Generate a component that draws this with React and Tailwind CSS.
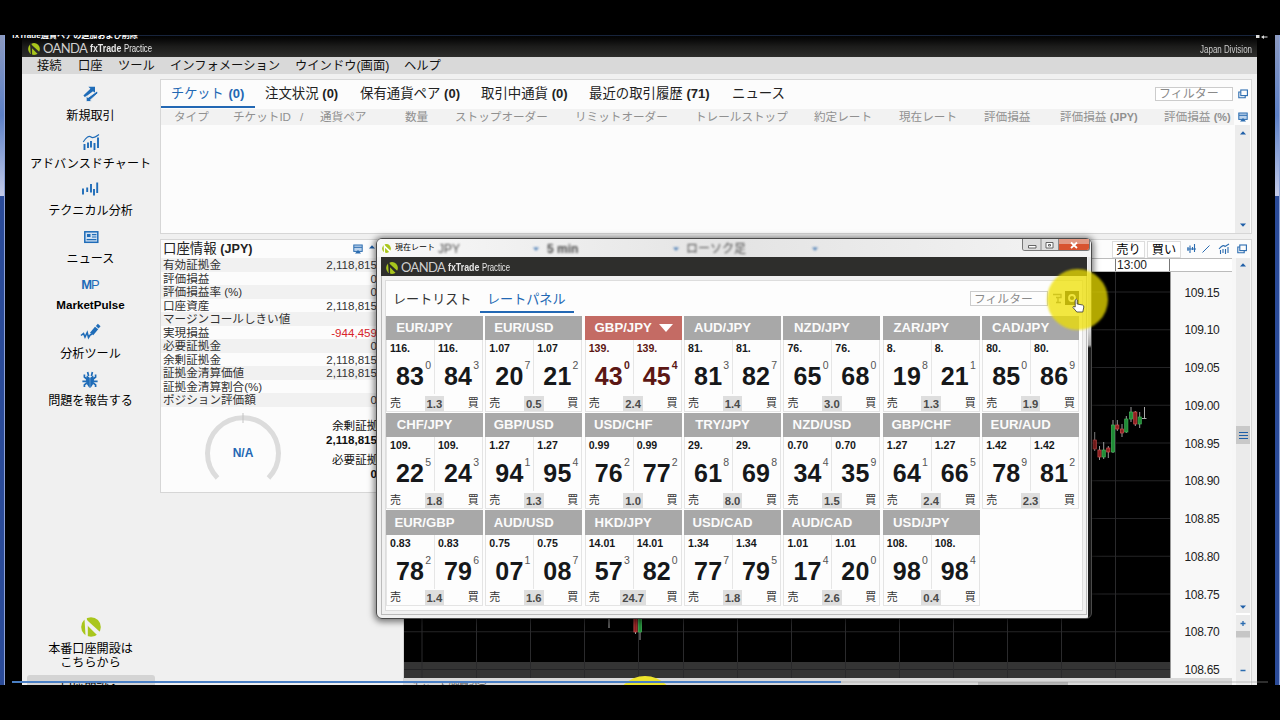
import React from "react";

const Logo = ({ size = 20, cut = "#fff", color = "#a9c61c" }) => (
  <svg width={size} height={size} viewBox="0 0 20 20" className="shrink-0">
    <circle cx="10" cy="10" r="9.8" fill={color} />
    <path d="M3.4 0 H5.4 L6.8 6 V20 H4.6 Z" fill={cut} />
    <path d="M3.2 1.5 L6.4 3.4 L19.6 15.4 L17 19 L5.4 7.4 Z" fill={cut} />
  </svg>
);

const Brand = ({ logoSize }) => (
  <div className="flex items-center whitespace-nowrap text-[#e6e6e6]">
    <Logo size={logoSize} cut="#2b2b29" />
    <span className="ml-[3px] w-[47px] font-['Lato'] text-[13px] leading-none font-normal tracking-[-0.6px] text-[#d0d0d0]">OANDA</span>
    <span className="w-[34px] origin-left scale-x-[0.84] text-[10.5px] leading-none font-bold">fxTrade</span>
    <span className="w-[28px] origin-left scale-x-[0.74] text-[10.5px] leading-none">Practice</span>
  </div>
);

const Popout = () => (
  <svg width="10" height="10" viewBox="0 0 10 10" fill="none" stroke="#2b6cb0" strokeWidth="1.1">
    <rect x="2.8" y="1" width="6.6" height="5.6" />
    <path d="M2.8 3 H0.8 V8.8 H7.2 V6.6" />
  </svg>
);

const Dock = () => (
  <svg width="10" height="10" viewBox="0 0 10 10">
    <rect x="0.8" y="1" width="8.4" height="6.4" fill="#bcd3ec" stroke="#2b6cb0" />
    <path d="M1 3.3 H9" stroke="#2b6cb0" />
    <path d="M2 9.5 L5 6 L8 9.5 Z" fill="#2b6cb0" />
  </svg>
);

const Arrow = ({ down = false }) => (
  <svg width="6" height="4" viewBox="0 0 6 4">
    <path d={down ? "M0 0.5 H6 L3 3.8 Z" : "M0 3.5 H6 L3 0.2 Z"} fill="#1f5fa8" />
  </svg>
);

const icons = {
  trade: (
    <g fill="#1f6cb8">
      <path d="M7.4 1.8 H14 V8 L12 6.2 L4 12.2 L2.4 10.4 L9.4 3.8 Z" />
      <path d="M10.6 16.4 H4.8 V10.8 L6.6 12.4 L15.4 6 L16.8 7.8 L9 14.8 Z" transform="translate(.4 .2)" stroke="#f0f0f0" strokeWidth=".9" />
    </g>
  ),
  chart: (
    <g fill="none" stroke="#1f6cb8" strokeWidth="1.9">
      <path d="M1.2 9 Q6 1.5 9 4 Q11 6 17 1.5" strokeWidth="1.1" />
      <path d="M2.5 11 V17 M6 9.5 V15 M9 8 V14.5 M12.5 10 V17 M16 4.5 V15" />
    </g>
  ),
  technical: (
    <g fill="none" stroke="#1f6cb8" strokeWidth="1.9">
      <path d="M2 8.5 V14.5 M6.2 7.5 V12 M10 4 V12.5 M13 9 V15.5 M16.2 2.5 V13" />
    </g>
  ),
  news: (
    <g fill="none" stroke="#1f6cb8" strokeWidth="1.5">
      <rect x="2.8" y="3.8" width="13" height="10.5" fill="#cfe0f2" />
      <rect x="5" y="6" width="3.5" height="3" fill="#1f6cb8" stroke="none" />
      <path d="M10 6.6 H14.4 M10 9 H14.4 M4.6 11.6 H14.4" strokeWidth="1.2" />
    </g>
  ),
  tools: (
    <g fill="none" stroke="#1f6cb8" strokeWidth="1.8">
      <path d="M0 12.5 L2.5 10.5 L4 14 L6.2 9.5 L7.5 14.5 L9.5 11.5 L11 11.5" strokeWidth="1.6" />
      <path d="M10.6 11 L15.6 5" strokeWidth="4.2" />
      <path d="M16.2 4.3 L18.2 2" strokeWidth="3.6" />
    </g>
  ),
  bug: (
    <g fill="none" stroke="#1f6cb8" strokeWidth="1.7">
      <path d="M8.2 16.5 Q4.2 12 6.2 6.5 L8.2 8 Z M9.8 16.5 Q13.8 12 11.8 6.5 L9.8 8 Z" fill="#1f6cb8" strokeWidth="1.2" />
      <path d="M5.8 9 L3.4 7 V4.4 M5.6 11.4 H1.4 M5.8 13 L3.4 14.8 V17 M12.2 9 L14.6 7 V4.4 M12.4 11.4 H16.6 M12.2 13 L14.6 14.8 V17 M7.6 6 L6.6 2 M10.4 6 L11.4 2" />
    </g>
  ),
};

const sidebar = [
  { icon: "trade", label: "新規取引" },
  { icon: "chart", label: "アドバンスドチャート" },
  { icon: "technical", label: "テクニカル分析" },
  { icon: "news", label: "ニュース" },
  { icon: "mp", label: "MarketPulse" },
  { icon: "tools", label: "分析ツール" },
  { icon: "bug", label: "問題を報告する" },
];

const Sidebar = () => (
  <aside className="flex w-[137px] shrink-0 flex-col items-center bg-[#f0f0f0] pt-[11px] text-black">
    {sidebar.map(({ icon, label }) => (
      <div key={label} className="flex h-[47.55px] flex-col items-center">
        {icon === "mp" ? (
          <span className="h-[18px] text-[13px] leading-[20px] font-bold text-[#1f6cb8]">
            M<span className="-ml-px font-normal">P</span>
          </span>
        ) : (
          <svg width="18" height="18" viewBox="0 0 18 18" className="overflow-visible">{icons[icon]}</svg>
        )}
        <span className={`whitespace-nowrap ${icon === "mp" ? "mt-[3px] text-[11.6px] leading-[18px] font-bold" : "mt-[4px] text-[12.1px] leading-[18px]"}`}>{label}</span>
      </div>
    ))}
    <div className="mt-[199px] flex flex-col items-center">
      <Logo size={20} cut="#f0f0f0" />
      <p className="mt-[5px] text-center text-[12.1px] leading-[14.5px]">
        本番口座開設は
        <br />
        こちらから
      </p>
      <div className="mt-[4px] h-5 w-[128px] rounded-[3px] bg-[#d4d4d4] pt-[5px] text-center text-[12px] leading-[17px]">口座開設へ</div>
    </div>
  </aside>
);

const menu = [
  { label: "接続", w: "w-[41px]" },
  { label: "口座", w: "w-[40px]" },
  { label: "ツール", w: "w-[52px]" },
  { label: "インフォメーション", w: "w-[125px]" },
  { label: "ウインドウ(画面)", w: "w-[109px]" },
  { label: "ヘルプ", w: "w-[50px]" },
];

const tabs = [
  { label: "注文状況", count: "(0)", w: "w-[95px]" },
  { label: "保有通貨ペア", count: "(0)", w: "w-[121px]" },
  { label: "取引中通貨", count: "(0)", w: "w-[108px]" },
  { label: "最近の取引履歴", count: "(71)", w: "w-[143px]" },
  { label: "ニュース", w: "w-[60px]" },
];

const columns = [
  { label: "タイプ", w: "w-[59px]" },
  { label: "チケットID", w: "w-[67px]" },
  { label: "/", w: "w-[20px]" },
  { label: "通貨ペア", w: "w-[85px]" },
  { label: "数量", w: "w-[50px]" },
  { label: "ストップオーダー", w: "w-[120px]" },
  { label: "リミットオーダー", w: "w-[120px]" },
  { label: "トレールストップ", w: "w-[119px]" },
  { label: "約定レート", w: "w-[85px]" },
  { label: "現在レート", w: "w-[85px]" },
  { label: "評価損益", w: "w-[76px]" },
  { label: "評価損益", unit: "(JPY)", w: "w-[104px]" },
  { label: "評価損益", unit: "(%)", w: "w-[68px]" },
];

const TicketPanel = () => (
  <section className="flex h-[155px] w-[1092px] flex-col border border-[#d6d6d6] bg-[#fcfcfc]">
    <div className="flex h-[29px] items-start">
      <div className="h-[28px] w-[94px] border-b-2 border-[#2368b4] pl-[10px] text-[13.2px] leading-[27px] whitespace-nowrap text-[#2368b4]">
        チケット <b className="ml-px text-[13px]">(0)</b>
      </div>
      <div className="ml-[10px] flex text-[13.4px] leading-[27px] whitespace-nowrap text-[#222]">
        {tabs.map((t) => (
          <div key={t.label} className={`${t.w} shrink-0`}>
            {t.label} {t.count && <b className="text-[13px]">{t.count}</b>}
          </div>
        ))}
      </div>
      <div className="mt-[7px] mr-[5px] ml-auto h-[14px] w-[78px] border border-[#ccc] bg-white pl-[3px] text-[12px] leading-[13px] text-[#8a8a8a]">フィルター</div>
      <div className="mt-[9px] mr-[3px]"><Popout /></div>
    </div>
    <div className="flex h-[15px] items-center">
      <div className="flex w-[1073px] bg-[#f2f2f2] pl-[13px] text-[11.6px] leading-[15px] whitespace-nowrap text-[#909090]">
        {columns.map((c, i) => (
          <div key={i} className={`${c.w} shrink-0`}>
            {c.label} {c.unit && <b className="text-[11px]">{c.unit}</b>}
          </div>
        ))}
      </div>
      <div className="ml-[4px]"><Dock /></div>
    </div>
    <div className="mt-px mr-px flex flex-1 justify-end">
      <div className="flex w-[15px] flex-col items-center justify-between bg-[#ececec] py-[6px]">
        <Arrow />
        <Arrow down />
      </div>
    </div>
  </section>
);

const account = [
  ["有効証拠金", "2,118,815"],
  ["評価損益", "0"],
  ["評価損益率 (%)", "0"],
  ["口座資産", "2,118,815"],
  ["マージンコールしきい値", ""],
  ["実現損益", "-944,459"],
  ["必要証拠金", "0"],
  ["余剰証拠金", "2,118,815"],
  ["証拠金清算価値", "2,118,815"],
  ["証拠金清算割合(%)", ""],
  ["ポジション評価額", "0"],
];

const AccountPanel = () => (
  <section className="h-[254px] w-[236px] shrink-0 overflow-hidden border border-[#d6d6d6] bg-[#fcfcfc] text-[#333]">
    <div className="flex h-[18px] items-center pl-[2px]">
      <h2 className="w-[190px] text-[13.4px] leading-[18px] whitespace-nowrap text-[#222]">
        口座情報 <b className="text-[12.6px]">(JPY)</b>
      </h2>
      <Dock />
      <span className="mb-1 ml-[6px]"><Arrow /></span>
    </div>
    {account.map(([label, value], i) => (
      <div key={label} className={`flex h-[13.5px] justify-between pr-[18px] pl-[2px] text-[11.6px] leading-[13.5px] whitespace-nowrap ${i % 2 === 0 ? "bg-[#f1f1f1]" : ""}`}>
        <span>{label}</span>
        <span className={value.startsWith("-") ? "text-[#d8232a]" : ""}>{value}</span>
      </div>
    ))}
    <div className="flex">
      <svg width="164" height="85" viewBox="0 0 164 85">
        <path d="M56.5 71 A35.5 35.5 0 1 1 107.5 71" fill="none" stroke="#dcdcdc" strokeWidth="5" />
        <path d="M82 6 V16" stroke="#c4c4c4" />
        <text x="82" y="50" textAnchor="middle" fontSize="12" fontWeight="bold" fill="#2368b4" fontFamily="Liberation Sans">N/A</text>
      </svg>
      <div className="w-[52px] pt-[12px] text-[11.6px] leading-[14.5px] whitespace-nowrap text-[#111]">
        <div className="pl-[7px]">余剰証拠金</div>
        <div className="text-right font-bold">2,118,815</div>
        <div className="mt-[5px] pl-[7px]">必要証拠金</div>
        <div className="text-right font-bold">0</div>
      </div>
    </div>
  </section>
);

const gridX = [18, 72.5, 126.5, 180.5, 234.5, 279.5, 333.5, 387.5, 441.5, 495.5, 549.5, 603.5, 657.5, 711.5];
const prices = ["109.15", "109.10", "109.05", "109.00", "108.95", "108.90", "108.85", "108.80", "108.75", "108.70", "108.65"];

// x, body top, body bottom, wick top, wick bottom, rising
const candles = [
  [690.7, 168, 177, 160, 179, false],
  [695.5, 178, 185, 174, 188, false],
  [699.7, 178, 185, 170, 187, true],
  [704.3, 176, 180, 174, 186, false],
  [709, 153, 180, 148, 181, true],
  [713.3, 153, 157, 148, 159, false],
  [718, 157, 161, 152, 165, false],
  [722.3, 147, 160, 144, 161, true],
  [727, 140, 147, 135, 150, true],
  [731.3, 140, 152, 139, 154, false],
  [735.7, 145, 152, 140, 156, true],
  [231.5, 335, 360, 335, 362, false],
  [236, 335, 360, 335, 368, true],
];

const Chart = () => (
  <svg width="766" height="406" viewBox="0 0 766 406" className="block bg-black">
    <rect x="0" y="390" width="766" height="16" fill="#343434" />
    {prices.map((p, i) => (
      <path key={p} d={`M0 ${20 + i * 37.75} H766`} stroke="#242426" />
    ))}
    {gridX.map((x) => (
      <path key={x} d={`M${x} 0 V406`} stroke="#2a2a2c" />
    ))}
    {candles.map(([x, top, bottom, high, low, up], i) => (
      <g key={i}>
        <path d={`M${x} ${high} V${low}`} stroke="#9b9b9b" />
        <rect x={x - 1.6} y={top} width="3.2" height={bottom - top} fill={up ? "#1f8b35" : "#8e1f1f"} stroke={up ? "#44b35a" : "#d05252"} strokeWidth=".7" />
      </g>
    ))}
    <path d="M740.5 135 V147 M738 146.5 H742.5 M205 345 V356" stroke="#a9a9a9" />
  </svg>
);

const ChartPanel = () => (
  <section className="flex h-[450px] w-[849px] flex-col border border-[#d6d6d6] bg-[#f7f7f7]">
    <div className="flex h-[18px] items-center justify-end bg-[#fcfcfc] pr-[4px] text-[12.2px] text-black">
      <span className="mr-[2px] h-[17px] w-[33px] border border-[#ddd] bg-white text-center leading-[17px]">売り</span>
      <span className="mr-[6px] h-[17px] w-[34px] border border-[#ddd] bg-white text-center leading-[17px]">買い</span>
      <svg width="45" height="12" viewBox="0 0 45 12" fill="none" stroke="#2b6cb0">
        <path d="M1 4 V8 M3 2.5 V10 M5.5 4 V7 M7.5 1 V9 M0 6 H9" strokeWidth="1.1" />
        <path d="M15.5 9.5 L22.5 2.5" />
        <path d="M32 6 Q36 1 38 3.5 L42 1 M33.5 7 V11 M36 6 V10 M38.5 6 V11 M41 4 V10" strokeWidth="1.1" />
      </svg>
      <span className="ml-[5px]"><Popout /></span>
    </div>
    <div className="flex h-[428px] shrink-0">
      <div className="flex w-[828px] flex-col">
        <div className="flex h-[14px] shrink-0 border-y border-[#bbb] bg-white text-[12px] leading-[13px] text-[#222]">
          <div className="w-[712px] border-r border-[#777]" />
          <div className="w-[54px] border-r border-[#777] pl-[1px]">13:00</div>
        </div>
        <div className="flex h-[406px] shrink-0">
          <Chart />
          <div className="flex flex-1 flex-col border-l border-[#999] bg-[#f8f8f8] pt-[1.5px] text-[12px] text-[#222]">
            {prices.map((p) => (
              <div key={p} className="h-[37.75px] shrink-0 pl-[13.5px] leading-[38px] tracking-[-0.3px] last:h-[27px]">{p}</div>
            ))}
          </div>
        </div>
        <div className="relative flex h-[8px] shrink-0 bg-[#d8d8d8] pl-2 text-[9px] leading-[16px] text-[#555]">チャート/期間設定</div>
      </div>
      <div className="ml-[4px] flex w-[14px] flex-col items-center bg-[#ebebeb]">
        <div className="flex h-[357px] w-full shrink-0 flex-col items-center border-b-2 border-white pt-[5px]">
          <Arrow />
          <div className="mt-[159px] flex h-[18px] w-full flex-col items-center justify-center gap-[2px] bg-[#c9c9c9]">
            <i className="h-px w-[9px] bg-[#1f5fa8]" />
            <i className="h-px w-[9px] bg-[#1f5fa8]" />
            <i className="h-px w-[9px] bg-[#1f5fa8]" />
          </div>
          <div className="mt-auto mb-[4px] flex"><Arrow down /></div>
        </div>
        <svg width="14" height="66" viewBox="0 0 14 66">
          <path d="M4.5 8.5 H9.5 M7 6 V11 M4.5 55.5 H9.5" stroke="#2b6cb0" strokeWidth="1.3" />
          <rect y="16" width="14" height="6.5" fill="#c6c6c6" />
        </svg>
      </div>
    </div>
  </section>
);

const pairs = [
  ["EUR/JPY", "116.", "83", "0", "116.", "84", "3", "1.3"],
  ["EUR/USD", "1.07", "20", "7", "1.07", "21", "2", "0.5"],
  ["GBP/JPY", "139.", "43", "0", "139.", "45", "4", "2.4"],
  ["AUD/JPY", "81.", "81", "3", "81.", "82", "7", "1.4"],
  ["NZD/JPY", "76.", "65", "0", "76.", "68", "0", "3.0"],
  ["ZAR/JPY", "8.", "19", "8", "8.", "21", "1", "1.3"],
  ["CAD/JPY", "80.", "85", "0", "80.", "86", "9", "1.9"],
  ["CHF/JPY", "109.", "22", "5", "109.", "24", "3", "1.8"],
  ["GBP/USD", "1.27", "94", "1", "1.27", "95", "4", "1.3"],
  ["USD/CHF", "0.99", "76", "2", "0.99", "77", "2", "1.0"],
  ["TRY/JPY", "29.", "61", "8", "29.", "69", "8", "8.0"],
  ["NZD/USD", "0.70", "34", "4", "0.70", "35", "9", "1.5"],
  ["GBP/CHF", "1.27", "64", "1", "1.27", "66", "5", "2.4"],
  ["EUR/AUD", "1.42", "78", "9", "1.42", "81", "2", "2.3"],
  ["EUR/GBP", "0.83", "78", "2", "0.83", "79", "6", "1.4"],
  ["AUD/USD", "0.75", "07", "1", "0.75", "08", "7", "1.6"],
  ["HKD/JPY", "14.01", "57", "3", "14.01", "82", "0", "24.7"],
  ["USD/CAD", "1.34", "77", "7", "1.34", "79", "5", "1.8"],
  ["AUD/CAD", "1.01", "17", "4", "1.01", "20", "0", "2.6"],
  ["USD/JPY", "108.", "98", "0", "108.", "98", "4", "0.4"],
];

const Quote = ({ base, big, pip, active }) => (
  <div className={`flex-1 pl-[3px] ${active ? "text-[#5c1714]" : "text-[#16181a]"}`}>
    <div className="pt-[2px] text-[10.6px] leading-[12px] font-bold">{base}</div>
    <div className="mt-[6px] flex pl-[6px]">
      <span className="text-[25px] leading-[32px] font-bold tracking-[0.2px]">{big}</span>
      <span className={`pl-px text-[10.5px] leading-[11px] ${active ? "font-bold" : "text-[#555]"}`}>{pip}</span>
    </div>
  </div>
);

const RateCard = ({ data, active, last }) => {
  const [pair, sell, sellBig, sellPip, buy, buyBig, buyPip, spread] = data;
  return (
    <div className="flex flex-col border border-t-0 border-[#e4e4e4] bg-[#fdfdfd]">
      <div className={`-mx-px flex shrink-0 items-center text-[#fbfbfb] ${last ? "h-[25px]" : "h-[24px]"} ${active ? "bg-[#c46b64]" : "bg-[#a8a8a8]"}`}>
        <span className="w-[77px] text-center text-[13.2px] leading-none font-bold">{pair}</span>
        {active && (
          <svg width="14" height="8" viewBox="0 0 14 8" className="-ml-[3px]">
            <path d="M0 0 H14 L7 8 Z" fill="#fff" />
          </svg>
        )}
      </div>
      <div className="flex h-[54px] divide-x divide-[#e6e6e6]">
        <Quote base={sell} big={sellBig} pip={sellPip} active={active} />
        <Quote base={buy} big={buyBig} pip={buyPip} active={active} />
      </div>
      <div className={`flex items-end justify-between px-[3px] text-[11px] leading-[16px] text-[#333] ${last ? "h-[16px]" : "h-[17px]"}`}>
        <span className="w-[18px]">売</span>
        <span className="h-[15px] min-w-[19px] bg-[#dedede] px-[2px] text-center text-[11.3px] leading-[16px] font-bold text-[#4a4a4a]">{spread}</span>
        <span className="w-[18px] text-right">買</span>
      </div>
    </div>
  );
};

const RatesWindow = () => (
  <div className="absolute top-[203px] left-[376px] flex h-[381px] w-[716px] flex-col rounded-[6px] border border-[#4a4a4a] bg-[linear-gradient(90deg,#f1f1f1_0,#f1f1f1_711px,transparent_711px),linear-gradient(180deg,#ececec_0,#d8d8d8_90px,#a8a8a8_106px,#1a1a1a_109px)] shadow-[0_1px_6px_2px_rgba(0,0,0,0.5)]">
    <div className="flex h-[18px] shrink-0 rounded-t-[5px] bg-linear-to-r from-[#f8f8f8] via-[#e4e4e4] to-[#f4f4f4] pl-[5px]">
      <div className="flex items-center gap-[4px] text-[8px] leading-[18px] whitespace-nowrap text-black">
        <Logo size={9} />
        現在レート
      </div>
      <div className="mt-[2px] flex items-center text-[12px] text-[#222] opacity-80 blur-[1.3px]">
        <span className="w-[98px] pl-[3px]">JPY</span>
        <span className="w-[14px]"><Arrow down /></span>
        <b className="w-[126px]">5 min</b>
        <span className="w-[13px]"><Arrow down /></span>
        <span className="w-[126px]">ローソク足</span>
        <Arrow down />
      </div>
      <div className="mr-[1px] ml-auto flex h-[12px] overflow-hidden rounded-b-[3px] border border-t-0 border-[#777]">
        <svg width="66" height="12" viewBox="0 0 66 12">
          <rect width="36" height="12" fill="#ddd" />
          <path d="M18 0 V12 M35.5 0 V12" stroke="#888" />
          <rect x="36" width="30" height="12" fill="#d8532f" />
          <rect x="36" width="30" height="5" fill="#e19a85" />
          <path d="M5.5 6.5 h7.5 v2.5 h-7.5 z M23 3.5 h7 v5.5 h-7 z M25.5 5.5 h2 v1.5 h-2 z" fill="#fff" stroke="#555" strokeWidth=".9" />
          <path d="M48 3.5 L54 9 M54 3.5 L48 9" stroke="#fff" strokeWidth="1.8" />
        </svg>
      </div>
    </div>
    <div className="mr-[4px] ml-[4px] flex h-[19px] shrink-0 items-center bg-[#2e2e2c] pt-[2px] pl-[5px]">
      <Brand logoSize={12} />
    </div>
    <div className="mr-[4px] mb-[3px] ml-[4px] flex flex-1 border border-t-0 border-[#bbb] bg-[#f1f1f1] p-[3px] pt-[4px]">
      <div className="flex w-[699px] flex-col border border-[#ddd] bg-[#fdfdfd]">
        <div className="flex h-[34px] shrink-0 pt-[5px] text-[13.1px] leading-[27px]">
          <div className="w-[94px] pl-[7px] whitespace-nowrap text-[#333]">レートリスト</div>
          <div className="h-[27px] w-[94px] border-b-2 border-[#2368b4] pl-[7px] whitespace-nowrap text-[#2368b4]">レートパネル</div>
          <div className="mt-[5px] ml-[396px] h-[15px] w-[78px] border border-[#ccc] pl-[3px] text-[11.8px] leading-[14px] text-[#8a8a8a]">フィルター</div>
          <svg width="28" height="15" viewBox="0 0 28 15" className="mt-[5px] ml-[3px]">
            <path d="M2 3.5 H10 V6.5 H5 M7 7 V11 M5 11.5 H10" fill="none" stroke="#777" strokeWidth="1.4" />
            <rect x="14" width="14" height="14" fill="#33332c" />
            <circle cx="21" cy="7" r="3" fill="none" stroke="#fff" strokeWidth="1.8" />
          </svg>
        </div>
        <div className="grid w-[693px] grid-cols-7 gap-x-[2.5px] gap-y-[1px] pt-px">
          {pairs.map((p, i) => (
            <RateCard key={p[0]} data={p} active={p[0] === "GBP/JPY"} last={i >= 14} />
          ))}
        </div>
      </div>
    </div>
  </div>
);

// mouse highlight and hand cursor
const Pointer = () => (
  <div className="absolute top-[234px] left-[1047px] h-[61px] w-[61px]">
    <div className="h-full w-full rounded-full bg-[#eedf00]/75 blur-[1px]" />
    <svg width="13" height="15" viewBox="0 0 13 15" className="absolute top-[29px] left-[25px]">
      <path d="M3.2 9 V2 Q4.3 .2 5.2 2 V6 L10.5 7 Q12 7.5 11.8 9 L10.8 14 H4.8 L1 9.5 Q.8 7.6 3.2 9 Z" fill="#fff" stroke="#333" strokeWidth=".8" />
    </svg>
  </div>
);

const Edge = () => (
  <div className="flex w-[5px] shrink-0 flex-col border-r border-[#8ba1d6]">
    <div className="h-[161px] bg-linear-to-b from-[#8c9ac0] via-[#5d80c6] to-[#c4cbe8]" />
    <div className="flex-1 bg-[#2b4b98]" />
  </div>
);

const App = () => (
  <div className="h-[720px] w-[1280px] overflow-hidden bg-black pt-[35px] font-['Liberation_Sans','Noto_Sans_CJK_JP',sans-serif]">
    <div className="relative flex h-[650px] w-full overflow-hidden">
      <Edge />
      <div className="w-[17px] shrink-0" />
      <div className="flex w-[1235px] shrink-0 flex-col bg-[#f0f0f0]">
        <div className="flex h-[22px] shrink-0 items-end justify-between border-t border-[#17243c] bg-linear-to-b from-[#030303] via-[#1c1c1b] to-[#2d2d2b] pr-[5px] pb-[2px] pl-[6px]">
          <Brand logoSize={12} />
          <span className="origin-right scale-x-[0.8] text-[10px] leading-none text-[#ccc]">Japan Division</span>
        </div>
        <div className="flex h-[17px] shrink-0 bg-[#d9d9d9] pl-[15px] text-[12.3px] leading-[18px] whitespace-nowrap text-[#111]">
          {menu.map((m) => (
            <div key={m.label} className={`${m.w} shrink-0`}>{m.label}</div>
          ))}
        </div>
        <div className="flex">
          <Sidebar />
          <main className="ml-px flex flex-col gap-[5px] pt-[5px]">
            <TicketPanel />
            <div className="flex gap-[7px]">
              <AccountPanel />
              <ChartPanel />
            </div>
          </main>
        </div>
      </div>
      <div className="w-[18px] shrink-0" />
      <Edge />

      <RatesWindow />
      <Pointer />

      {/* video overlay: clip title, player controls, seek bar */}
      <div className="absolute -top-[5px] left-[12px] text-[8.1px] leading-[12px] font-bold whitespace-nowrap text-white">fxTrade通貨ペアの追加および削除</div>
      <svg width="12" height="4" viewBox="0 0 12 4" className="absolute top-0 left-[1256px]">
        <path d="M0 0 H3.5 V3 H0 Z M5 2 L8 0.2 V1.4 H11.5 V2.6 H8 V4 Z" fill="#ddd" />
      </svg>
      <div className="absolute top-[641px] left-[615px] h-[60px] w-[60px] rounded-full bg-[#eee42c]" />
      <div className="absolute top-[647px] left-[978px] h-1 w-[90px] bg-[#b4b4b4]" />
      <div className="absolute top-[646px] left-[12px] flex h-[2px] w-[1256px] bg-[#999]/30">
        <div className="w-[829px] bg-[#4a7fc4]" />
      </div>
    </div>
  </div>
);

export default App;
